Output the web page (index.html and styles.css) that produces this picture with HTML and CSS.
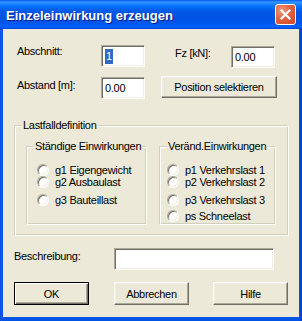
FILE: index.html
```html
<!DOCTYPE html>
<html lang="de">
<head>
  <meta charset="UTF-8">
  <title>Einzeleinwirkung erzeugen</title>
  <link rel="stylesheet" href="styles.css">
</head>
<body>
  <div class="window">
    <div class="titlebar">
      <span class="titlebar__text">Einzeleinwirkung erzeugen</span>
      <span class="titlebar__close">
        <svg width="11" height="11" viewBox="0 0 11 11">
          <path d="M1.5 1.5 L9.5 9.5 M9.5 1.5 L1.5 9.5" stroke="#fff" stroke-width="2.2" stroke-linecap="square"/>
        </svg>
      </span>
    </div>

    <div class="client">
      <div class="row row--first">
        <span class="field-label field-label--left">Abschnitt:</span>
        <span class="edit"><span class="edit__selected">1</span></span>
        <span class="field-label field-label--fz">Fz [kN]:</span>
        <span class="edit edit--fz">0.00</span>
      </div>

      <div class="row row--second">
        <span class="field-label field-label--left field-label--low">Abstand [m]:</span>
        <span class="edit edit--low">0.00</span>
        <span class="button button--position">Position selektieren</span>
      </div>

      <fieldset class="group group--outer">
        <legend class="group__legend">Lastfalldefinition</legend>
        <div class="group-columns">
          <fieldset class="group group--left">
            <legend class="group__legend">Ständige Einwirkungen</legend>
            <div class="radio-list">
              <span class="radio"><span class="radio__dot"></span>g1 Eigengewicht</span>
              <span class="radio"><span class="radio__dot"></span>g2 Ausbaulast</span>
              <span class="radio"><span class="radio__dot"></span>g3 Bauteillast</span>
            </div>
          </fieldset>
          <fieldset class="group group--right">
            <legend class="group__legend">Veränd.Einwirkungen</legend>
            <div class="radio-list">
              <span class="radio"><span class="radio__dot"></span>p1 Verkehrslast 1</span>
              <span class="radio"><span class="radio__dot"></span>p2 Verkehrslast 2</span>
              <span class="radio"><span class="radio__dot"></span>p3 Verkehrslast 3</span>
              <span class="radio"><span class="radio__dot"></span>ps Schneelast</span>
            </div>
          </fieldset>
        </div>
      </fieldset>

      <div class="row row--desc">
        <span class="field-label field-label--desc">Beschreibung:</span>
        <span class="edit edit--desc"></span>
      </div>

      <div class="row row--buttons">
        <span class="button button--default">OK</span>
        <span class="button">Abbrechen</span>
        <span class="button">Hilfe</span>
      </div>
    </div>
  </div>
</body>
</html>
```

FILE: styles.css
```css
body, html {
  margin: 0;
  font-family: "Liberation Sans", Arial, sans-serif;
  font-size: 11px;
  letter-spacing: -0.3px;
  color: #000;
}

.window {
  width: 302px;
  height: 321px;
  display: flex;
  flex-direction: column;
  background: linear-gradient(to right, #0831d9 0, #166aee 1px, #0055e5 2px, #0055e5 299px, #0042c8 301px);
}

.titlebar {
  height: 29px;
  flex: none;
  display: flex;
  align-items: center;
  justify-content: space-between;
  padding: 0 6px 0 6px;
  box-sizing: border-box;
  background: linear-gradient(#0058ee 0, #3593ff 2px, #288eff 3px, #127dff 5px, #036ffc 7px, #0262ee 9px, #0057e5 12px, #0054e3 18px, #0055eb 23px, #005bf5 25px, #0062ff 27px, #0043cf 29px);
}

.titlebar__text {
  color: #fff;
  font-weight: bold;
  font-size: 13px;
  letter-spacing: 0;
  padding-top: 2px;
  text-shadow: 1px 1px #0a1883;
}

.titlebar__close {
  width: 21px;
  height: 21px;
  box-sizing: border-box;
  border: 1px solid #fff;
  border-radius: 3px;
  background: radial-gradient(circle at 30% 30%, #f09a7c 0, #e2623c 45%, #cc4a26 100%);
  display: flex;
  align-items: center;
  justify-content: center;
}

.client {
  flex: 1;
  margin: 0 3px 4px 3px;
  background: #ece9d8;
}

.row {
  display: flex;
  align-items: flex-start;
}

.row--first {
  margin-top: 16px;
}

.row--second {
  margin-top: 8px;
}

.field-label {
  line-height: 13px;
  white-space: nowrap;
}

.field-label--left {
  width: 84px;
  padding-left: 14px;
}

.field-label--low {
  margin-top: 3px;
}

.field-label--fz {
  width: 56px;
  margin-left: 30px;
  margin-top: 2px;
}

.edit {
  width: 44px;
  height: 22px;
  box-sizing: border-box;
  background: #fff;
  border: 1px solid;
  border-color: #aca899 #fff #fff #aca899;
  box-shadow: inset 1px 1px #716f64, inset -1px -1px #f1efe2;
  padding: 4px 0 0 3px;
  line-height: 13px;
}

.edit--fz {
  margin-top: 1px;
}

.edit--low {
  margin-top: 1px;
}

.edit__selected {
  background: #316ac5;
  color: #fff;
  padding: 1px 1px 2px;
}

.button {
  width: 75px;
  height: 23px;
  box-sizing: border-box;
  display: flex;
  align-items: center;
  justify-content: center;
  white-space: nowrap;
  border: 1px solid;
  border-color: #fff #716f64 #716f64 #fff;
  box-shadow: inset -1px -1px #aca899, inset 1px 1px #f1efe2;
}

.button--position {
  width: 116px;
  height: 22px;
  margin-left: 16px;
}

.button--default {
  border-color: #000;
  box-shadow: inset 1px 1px #fff, inset -1px -1px #716f64, inset -2px -2px #aca899;
}

.group {
  margin: 0;
  padding: 0;
  min-width: 0;
  border: 1px solid;
  border-color: #d0d0bf #fff #fff #d0d0bf;
  box-shadow: inset 1px 1px #fff, inset -1px -1px #d0d0bf;
}

.group__legend {
  margin-left: 7px;
  padding: 0 1px;
  line-height: 13px;
  white-space: nowrap;
  background: #ece9d8;
}

.group--outer {
  margin: 20px 0 0 11px;
  width: 275px;
  height: 117px;
  box-sizing: border-box;
}

.group-columns {
  display: flex;
  margin: 8px 0 0 11px;
  gap: 12px;
}

.group--left {
  width: 121px;
  height: 85px;
  box-sizing: border-box;
}

.group--right {
  width: 117px;
  height: 85px;
  box-sizing: border-box;
}

.radio-list {
  display: grid;
  grid-template-rows: 12px 18px 16px 13px;
  margin: 10px 0 0 10px;
}

.radio {
  display: flex;
  align-items: center;
  height: 13px;
  white-space: nowrap;
}

.radio__dot {
  width: 12px;
  height: 12px;
  flex: none;
  box-sizing: border-box;
  border-radius: 50%;
  margin-right: 6px;
  background: #fff;
  border: 1px solid;
  border-color: #aca899 #fff #fff #aca899;
  box-shadow: inset 1px 1px #716f64, inset -1px -1px #f1efe2;
}

.group--right .radio__dot {
  margin-left: -3px;
}

.row--desc {
  margin-top: 12px;
}

.field-label--desc {
  width: 100px;
  padding-left: 11px;
  margin-top: 2px;
}

.edit--desc {
  width: 160px;
  height: 22px;
}

.row--buttons {
  margin-top: 12px;
  padding-left: 11px;
  gap: 25px;
}

.row--buttons .button + .button + .button {
  margin-left: -1px;
}
```
